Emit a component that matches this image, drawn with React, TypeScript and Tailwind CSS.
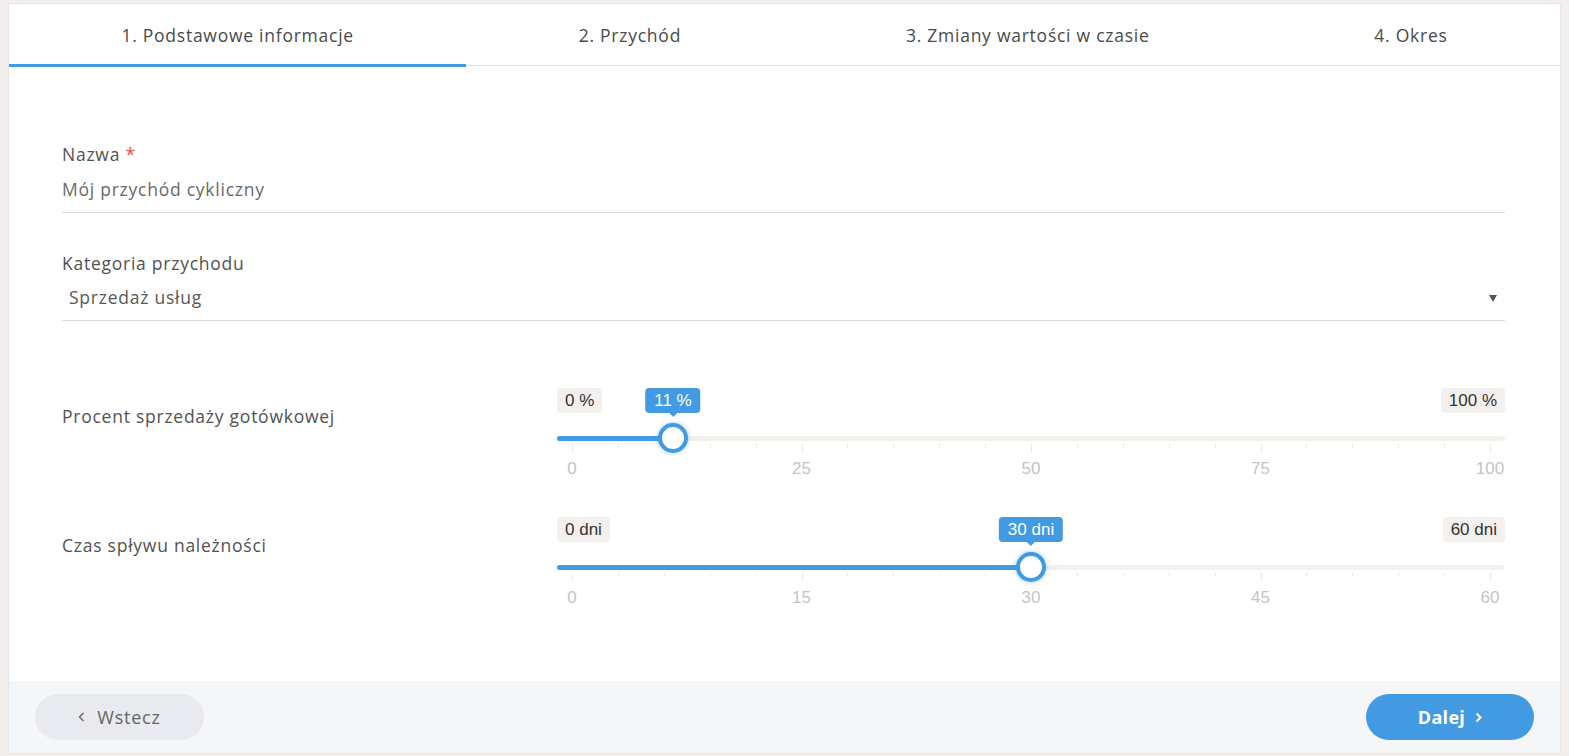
import React from "react";

const tabs = ["1. Podstawowe informacje", "2. Przychód", "3. Zmiany wartości w czasie", "4. Okres"];

interface SliderProps {
  min: number;
  max: number;
  value: number;
  unit: string;
}

// ion.rangeSlider-like widget: min/max tags, value tag, track with grid
const RangeSlider = ({ min, max, value, unit }: SliderProps) => {
  const pct = ((value - min) / (max - min)) * 100;
  const ticks = Array.from({ length: 21 }, (_, i) => i * 5);

  return (
    <div className="relative h-[95px] font-['Liberation_Sans',Arial,sans-serif] tracking-normal">
      <span className="absolute left-0 top-0 h-[25px] rounded-[4px] bg-[#f3f0ed] px-2 text-[17px] leading-[25px] text-[#333]">
        {min} {unit}
      </span>
      <span className="absolute right-0 top-0 h-[25px] rounded-[4px] bg-[#f3f0ed] px-2 text-[17px] leading-[25px] text-[#333]">
        {max} {unit}
      </span>
      <div className="absolute left-0 right-0 top-[48px] h-[5px] rounded-full bg-[#f4f0ec]" />

      <div className="absolute inset-y-0 left-[15px] right-[15px]">
        <div
          className="absolute left-[-15px] top-[48px] h-[5px] rounded-full bg-[#429be2]"
          style={{ width: `calc(${pct}% + 15px)` }}
        />

        {ticks.map((t) => (
          <span
            key={t}
            className={`absolute top-[56px] w-px bg-[#e6e6e6] ${t % 25 === 0 ? "h-[8px]" : "h-[4px]"}`}
            style={{ left: `${t}%` }}
          />
        ))}
        {[0, 25, 50, 75, 100].map((t) => (
          <span
            key={t}
            className="absolute top-[71px] -translate-x-1/2 text-[17px] leading-5 text-[#c4c4c4]"
            style={{ left: `${t}%` }}
          >
            {min + ((max - min) * t) / 100}
          </span>
        ))}

        <span
          className="absolute top-0 h-[25px] -translate-x-1/2 whitespace-nowrap rounded-[4px] bg-[#429be2] px-[9px] text-[17px] leading-[25px] text-white"
          style={{ left: `${pct}%` }}
        >
          {value} {unit}
          <span className="absolute left-1/2 top-full -translate-x-1/2 border-x-[4px] border-t-[4px] border-x-transparent border-t-[#429be2]" />
        </span>

        <span
          className="absolute top-[35px] h-[30px] w-[30px] -translate-x-1/2 rounded-full border-[4px] border-[#429be2] bg-white shadow-[0_0_4px_rgba(66,155,226,0.55)]"
          style={{ left: `${pct}%` }}
        />
      </div>
    </div>
  );
};

export default function App() {
  return (
    <div className="min-h-screen bg-[#f1eeeb] px-2 pt-[3px] font-['Open_Sans',sans-serif] tracking-[0.75px]">
      <div className="flex h-[751px] flex-col border border-[#e4e4ea] bg-white">
        {/* steps */}
        <div className="flex h-[62px] border-b border-[#e2e5ef]">
          {tabs.map((tab, i) => (
            <div
              key={tab}
              className="relative flex flex-auto items-center justify-center pt-[2px] text-[17.5px] text-[#4a4a4a]"
            >
              {tab}
              {i === 0 && <span className="absolute bottom-[-2px] left-0 right-0 h-[3px] bg-[#429be2]" />}
            </div>
          ))}
        </div>

        <div className="pl-[53px] pr-[55px] pt-[76px] text-[17.5px]">
          <label className="block leading-6 text-[#525252]">
            Nazwa <span className="text-[#e74c3c]">*</span>
          </label>
          <div className="flex h-[47px] items-center border-b border-[#d6dbe2] text-[#696969]">
            Mój przychód cykliczny
          </div>

          <label className="mt-[38px] block leading-6 text-[#525252]">Kategoria przychodu</label>
          <div className="flex h-[46px] items-center justify-between border-b border-[#d6dbe2] pl-[7px] pr-[8px] text-[#585858]">
            <span>Sprzedaż usług</span>
            <svg width="8" height="8" viewBox="0 0 8 8">
              <path d="M0 1h8L4 8z" fill="#555" />
            </svg>
          </div>

          <div className="mt-[67px] grid grid-cols-[495px_1fr] gap-y-[34px]">
            <div className="pt-[16px] leading-6 text-[#525252]">Procent sprzedaży gotówkowej</div>
            <RangeSlider min={0} max={100} value={11} unit="%" />
            <div className="pt-[16px] leading-6 text-[#525252]">Czas spływu należności</div>
            <RangeSlider min={0} max={60} value={30} unit="dni" />
          </div>
        </div>

        <div className="mt-auto flex h-[72px] items-center justify-between bg-[#f5f6f8] px-[26px]">
          <button className="flex h-[46px] w-[169px] items-center justify-center gap-[12px] rounded-full bg-[#e9eaef] text-[18px] text-[#666]">
            <svg width="7" height="10" viewBox="0 0 7 10" fill="none" stroke="#666" strokeWidth="1.4">
              <path d="M5.5 1 1.5 5l4 4" />
            </svg>
            Wstecz
          </button>
          <button className="flex h-[46px] w-[168px] items-center justify-center gap-[10px] rounded-full bg-[#429be2] text-[18px] font-bold tracking-[0.3px] text-white">
            Dalej
            <svg width="7" height="11" viewBox="0 0 7 11" fill="none" stroke="#fff" strokeWidth="2">
              <path d="M1.5 1.5 5.5 5.5l-4 4" />
            </svg>
          </button>
        </div>
      </div>
    </div>
  );
}
